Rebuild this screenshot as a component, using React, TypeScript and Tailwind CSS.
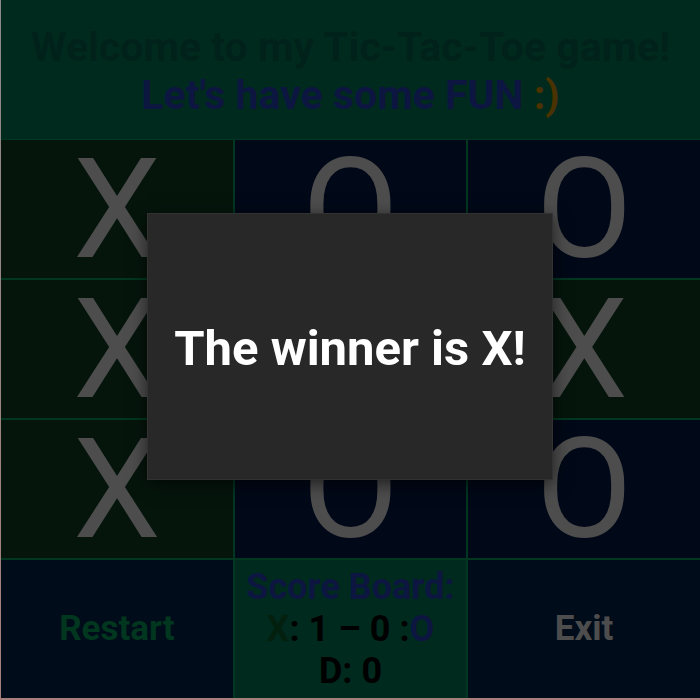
import React from "react";

const BOARD = ["X", "O", "O", "X", "O", "X", "X", "O", "O"];

function Cell({ mark }: { mark: string }) {
  const isX = mark === "X";
  return (
    <div
      className={
        isX
          ? "flex items-center justify-center bg-[#05150c]"
          : "flex items-center justify-center bg-[#010817]"
      }
    >
      <span className="text-[140px] leading-[138px] font-normal text-[#4d4d4d]">{mark}</span>
    </div>
  );
}

export default function App() {
  return (
    <div
      className="relative w-[700px] h-[700px] overflow-hidden bg-gradient-to-b from-[#8a8a8a] to-[#a67f7c]"
      style={{ fontFamily: "Roboto, 'Liberation Sans', sans-serif" }}
    >
      <div className="ml-px h-[698px] flex flex-col bg-[#013620]">
        {/* Header */}
        <div className="h-[139px] shrink-0 bg-[#012a1e] flex flex-col items-center justify-center pt-[3px] font-bold text-[41px] leading-[48px]">
          <div className="text-[#01221a]">Welcome to my Tic-Tac-Toe game!</div>
          <div className="text-[#0c1640]">
            Let's have some FUN <span className="text-[#4a3300]">:)</span>
          </div>
        </div>

        {/* Board */}
        <div className="mt-px grid grid-cols-3 grid-rows-[138px_138px_138px_138px] gap-[2px]">
          {BOARD.map((m, i) => (
            <Cell key={i} mark={m} />
          ))}

          {/* Controls */}
          <div className="flex items-center justify-center bg-[#010c1a] text-[35px] font-bold text-[#01361f]">
            Restart
          </div>
          <div className="flex flex-col items-center justify-center bg-[#012a1e] text-[36px] font-bold leading-[42px] text-black">
            <div className="text-[#0c1640]">Score Board:</div>
            <div>
              <span className="text-[#03200f]">X</span>: 1 – 0 :<span className="text-[#0c1640]">O</span>
            </div>
            <div>D: 0</div>
          </div>
          <div className="flex items-center justify-center bg-[#010c1a] text-[35px] font-bold text-[#4d4d4d]">
            Exit
          </div>
        </div>
      </div>

      {/* Winner modal */}
      <div className="absolute left-[147px] top-[213px] w-[406px] h-[267px] bg-[#282828] border border-[#323232] shadow-[0_4px_16px_rgba(0,0,0,0.6)] flex items-center justify-center pt-[4px]">
        <span className="text-white font-bold text-[49px]">The winner is X!</span>
      </div>
    </div>
  );
}
